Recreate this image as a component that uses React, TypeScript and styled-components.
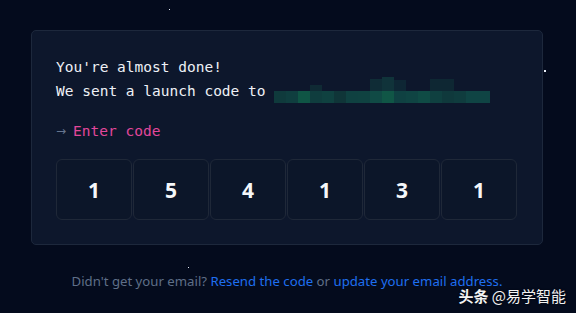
import React, { FC } from 'react';
import styled, { createGlobalStyle } from 'styled-components';

const GlobalStyle = createGlobalStyle`
  html, body {
    margin: 0;
    padding: 0;
    background: #040b1d;
  }
  #root {
    min-height: 313px;
  }
`;

const digits = ['1', '5', '4', '1', '3', '1'];

// pixelated blur of the address: [x, y, w, h, colour]
const blurBlocks: [number, number, number, number, string][] = [
  [36, 8, 12, 6, '#0f2a34'],
  [96, 2, 12, 12, '#0f2c36'],
  [108, 0, 12, 14, '#10333a'],
  [120, 3, 12, 11, '#0e2634'],
  [156, 2, 24, 12, '#0e2733'],
  [0, 14, 12, 12, '#0f3a3c'],
  [12, 14, 12, 12, '#0f3e3f'],
  [24, 14, 12, 12, '#0f5545'],
  [36, 14, 12, 12, '#0f3d3e'],
  [48, 14, 12, 12, '#0f4140'],
  [60, 14, 12, 12, '#0f3538'],
  [72, 14, 12, 12, '#0f4141'],
  [84, 14, 12, 12, '#0f4241'],
  [96, 14, 12, 12, '#104a45'],
  [108, 14, 12, 12, '#105646'],
  [120, 14, 12, 12, '#0f4142'],
  [132, 14, 12, 12, '#0f4443'],
  [144, 14, 12, 12, '#0f4b45'],
  [156, 14, 12, 12, '#0f4040'],
  [168, 14, 12, 12, '#0f393c'],
  [180, 14, 12, 12, '#0f3c3e'],
  [192, 14, 12, 12, '#0f4444'],
  [204, 14, 12, 12, '#0f4444'],
];

const BlurredEmail: FC = () => (
  <BlurSvg width="216" height="26" viewBox="0 0 216 26">
    {blurBlocks.map(([x, y, w, h, c], i) => (
      <rect key={i} x={x} y={y} width={w} height={h} fill={c} />
    ))}
  </BlurSvg>
);

const App: FC = () => (
  <Page>
    <GlobalStyle />
    <Star x={169} y={9} size={1} />
    <Star x={544} y={70} size={2} />
    <Star x={188} y={267} size={1} />
    <Card>
      <Message>
        <Line>You're almost done!</Line>
        <Line>
          We sent a launch code to <BlurredEmail />
        </Line>
      </Message>
      <Prompt>
        <Arrow>→</Arrow>
        <span>Enter code</span>
      </Prompt>
      <CodeRow>
        {digits.map((d, i) => (
          <CodeBox key={i}>{d}</CodeBox>
        ))}
      </CodeRow>
    </Card>
    <Footer>
      Didn't get your email? <FooterLink>Resend the code</FooterLink> or{' '}
      <FooterLink>update your email address.</FooterLink>
    </Footer>
    <Watermark>
      <strong>头条</strong> @易学智能
    </Watermark>
  </Page>
);

const Page = styled.div`
  position: relative;
  width: 576px;
  height: 313px;
  overflow: hidden;
  background: #040b1d;
  padding: 30px 0 0 31px;
  box-sizing: border-box;
  display: flex;
  flex-direction: column;
  gap: 27px;
`;

const Star = styled.span<{ x: number; y: number; size: number }>`
  position: absolute;
  left: ${({ x }) => x}px;
  top: ${({ y }) => y}px;
  width: ${({ size }) => size}px;
  height: ${({ size }) => size}px;
  background: #e8eef8;
`;

const Card = styled.section`
  width: 512px;
  box-sizing: border-box;
  padding: 24px 24px;
  background: #0d172c;
  border: 1px solid #1d283c;
  border-radius: 5px;
  display: flex;
  flex-direction: column;
  gap: 16px;
`;

const Message = styled.div`
  font-family: 'DejaVu Sans Mono', 'Liberation Mono', monospace;
  font-size: 14.5px;
  line-height: 24px;
  color: #eef1f6;
`;

const Line = styled.div`
  display: flex;
  align-items: center;
  white-space: pre;
`;

const BlurSvg = styled.svg`
  display: block;
  margin-top: -3px;
`;

const Prompt = styled.div`
  display: flex;
  align-items: center;
  gap: 7px;
  font-family: 'DejaVu Sans Mono', 'Liberation Mono', monospace;
  font-size: 14.5px;
  line-height: 24px;
  color: #e2479b;
`;

const Arrow = styled.span`
  color: #66758f;
  font-family: 'DejaVu Sans', sans-serif;
  font-size: 12px;
`;

const CodeRow = styled.div`
  display: grid;
  grid-template-columns: repeat(6, 76px);
  gap: 1px;
`;

const CodeBox = styled.div`
  height: 61px;
  box-sizing: border-box;
  display: flex;
  align-items: center;
  justify-content: center;
  border: 1px solid #1f2838;
  border-radius: 6px;
  background: #0c1629;
  font-family: 'Noto Sans', 'DejaVu Sans', sans-serif;
  font-weight: 700;
  font-size: 21px;
  color: #f5f7fa;
`;

const Footer = styled.p`
  width: 512px;
  margin: 0;
  text-align: center;
  font-family: 'Noto Sans', 'Open Sans', sans-serif;
  font-size: 13.2px;
  line-height: 18px;
  color: #5f6f88;
`;

const FooterLink = styled.a`
  color: #1f6ff0;
  cursor: pointer;
`;

const Watermark = styled.div`
  position: absolute;
  right: 10px;
  bottom: 7px;
  font-family: 'Noto Sans CJK SC', sans-serif;
  font-size: 15px;
  line-height: 20px;
  color: #f2f2f2;
  text-shadow: 0 0 2px rgba(0, 0, 0, 0.6);

  strong {
    font-weight: 700;
  }
`;

export default App;
